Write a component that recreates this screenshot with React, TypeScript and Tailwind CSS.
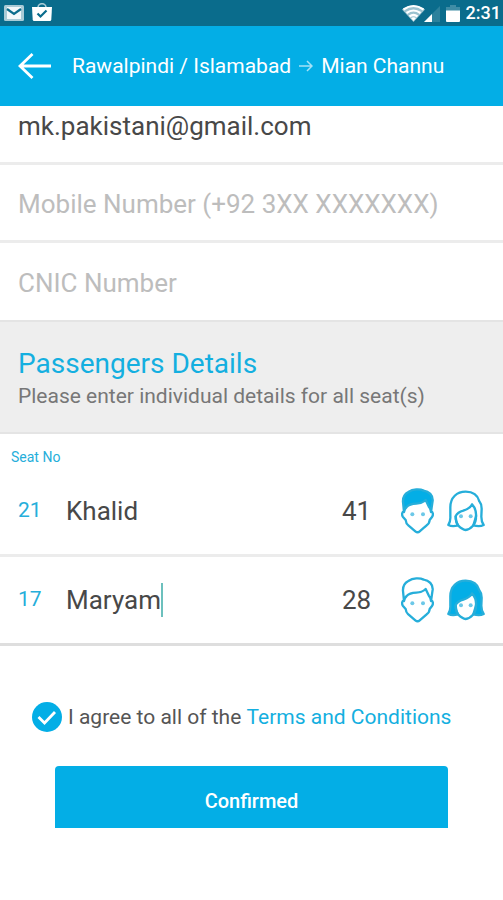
import { useState } from "react";

type Gender = "male" | "female";

type Passenger = {
  seat: number;
  name: string;
  age: string;
  gender: Gender;
};

const initialPassengers: Passenger[] = [
  { seat: 21, name: "Khalid", age: "41", gender: "male" },
  { seat: 17, name: "Maryam", age: "28", gender: "female" },
];

function StatusBar() {
  return (
    <div className="flex h-[26px] items-center justify-between bg-[#0a6c8c] pl-1 pr-[2px] text-white">
      <div className="flex items-center gap-2">
        <svg viewBox="0 0 20 16" className="h-4 w-5" aria-hidden="true">
          <rect width="20" height="16" rx="1.5" fill="#a9cbd6" />
          <path d="M3 2h14v12H3z" fill="#f2f8fa" />
          <path d="m3 4 7 5 7-5" fill="none" stroke="#0a6c8c" strokeWidth="2.2" />
        </svg>
        <svg viewBox="0 0 20 18" className="mb-[2px] h-[18px] w-5" aria-hidden="true">
          <path d="M6 4.5a4 3.8 0 0 1 8 0" fill="none" stroke="#a9cbd6" strokeWidth="1.6" />
          <path d="M0 4h20l-.7 12.5q-.1 1.5-1.5 1.5H2.2q-1.4 0-1.5-1.5z" fill="#fff" />
          <path d="m5.5 10.5 3 3 6-6" fill="none" stroke="#0a6c8c" strokeWidth="2.2" />
        </svg>
      </div>
      <div className="flex items-center">
        <svg viewBox="0 0 40 18" className="h-[18px] w-10" aria-hidden="true">
          <path d="M0 5.5Q11.5-3 23 5.5L11.5 18z" fill="#9cc3d0" />
          <path
            d="M1.5 5.5Q11.5-1.5 21.5 5.5M4.5 9q7-5 14 0M7.5 12.5q4-3 8 0"
            fill="none"
            stroke="#fff"
            strokeWidth="2.2"
          />
          <path d="m9 14 2.5 3 2.5-3q-2.5-1.5-5 0z" fill="#fff" />
          <path d="M22 18 38 2v16z" fill="#2c819c" />
          <path d="m22 18 8-8v8z" fill="#fff" />
        </svg>
        <svg viewBox="0 0 14 18" className="ml-1 h-[18px] w-[14px]" aria-hidden="true">
          <path d="M0 3h4V1h6v2h4v4H0z" fill="#3f8ca5" />
          <path d="M0 6.5h14V17q0 1-1 1H1q-1 0-1-1z" fill="#fff" />
        </svg>
        <span className="ml-[6px] text-lg leading-6 font-medium">2:31</span>
      </div>
    </div>
  );
}

function MaleIcon({ filled }: { filled: boolean }) {
  return (
    <svg
      viewBox="0 0 99 138"
      className="h-[46px] w-[33px]"
      fill="none"
      stroke="#26aeda"
      strokeWidth="7"
      strokeLinejoin="round"
      aria-hidden="true"
    >
      <path d="M9 70C2 71 2 82 6 87L14 96Q15 107 22 112L43 130Q50 136 56 130L77 112Q85 107 86 96L93 87C97 82 97 71 90 70" />
      <path
        d="M9 72L6 42C5 28 13 17 22 12C36 3 56 2 68 8C84 10 96 22 95 38L90 72Q89 62 84 57L74 36Q63 47 46 47Q25 48 17 57Q11 62 9 72Z"
        fill={filled ? "#03aee6" : "none"}
      />
      <g fill="#6cc8e8" stroke="none">
        <circle cx="34" cy="79" r="6" />
        <circle cx="66" cy="79" r="6" />
      </g>
    </svg>
  );
}

function FemaleIcon({ filled }: { filled: boolean }) {
  return (
    <svg
      viewBox="0 0 114 126"
      className="h-[42px] w-[38px]"
      fill="none"
      stroke="#26aeda"
      strokeWidth="7"
      strokeLinejoin="round"
      aria-hidden="true"
    >
      <path
        d="M33 106Q16 111 4 105Q11 94 10 80V52C10 22 30 5 56 5C78 5 92 15 97 34Q104 42 104 56L103 80Q103 95 110 105Q98 111 79 106L87 80Q89 58 75 43C71 53 60 58 49 62Q32 67 26 78Q26 96 33 106Z"
        fill={filled ? "#03aee6" : "none"}
      />
      <path d="M26 78Q26 97 34 107Q46 119 56 120Q67 119 78 107Q88 96 87 76" />
      <g fill="#6cc8e8" stroke="none">
        <circle cx="42" cy="79" r="6" />
        <circle cx="71" cy="79" r="6" />
      </g>
    </svg>
  );
}

type RowProps = {
  passenger: Passenger;
  editing: boolean;
  onChange: (passenger: Passenger) => void;
};

function PassengerRow({ passenger, editing, onChange }: RowProps) {
  const { seat, name, age, gender } = passenger;

  return (
    <li className="flex h-[89px] items-center border-b-[3px] border-[#ececec] px-[18px] last:border-[#dedede]">
      <span className="w-12 text-[21px] text-[#26aeda]">{seat}</span>
      <div className="flex min-w-0 flex-1 items-center">
        <input
          type="text"
          aria-label={`Name for seat ${seat}`}
          value={name}
          onChange={(e) => onChange({ ...passenger, name: e.target.value })}
          className="max-w-full text-[26px] leading-8 text-[#484848] outline-none [field-sizing:content]"
        />
        {editing && <span className="h-[34px] w-[2px] bg-[#6cc0bd]" />}
      </div>
      <input
        type="text"
        inputMode="numeric"
        aria-label={`Age for seat ${seat}`}
        value={age}
        onChange={(e) => onChange({ ...passenger, age: e.target.value })}
        className="w-[59px] text-[26px] leading-8 text-[#484848] outline-none"
      />
      <div className="flex items-center gap-[13px]">
        {(["male", "female"] as Gender[]).map((option) => (
          <label key={option} className="relative cursor-pointer">
            <input
              type="radio"
              name={`gender-${seat}`}
              aria-label={option}
              checked={gender === option}
              onChange={() => onChange({ ...passenger, gender: option })}
              className="sr-only"
            />
            {option === "male" ? (
              <MaleIcon filled={gender === "male"} />
            ) : (
              <FemaleIcon filled={gender === "female"} />
            )}
          </label>
        ))}
      </div>
    </li>
  );
}

export default function App() {
  const [passengers, setPassengers] = useState(initialPassengers);
  const [email, setEmail] = useState("mk.pakistani@gmail.com");
  const [agreed, setAgreed] = useState(true);

  const updatePassenger = (next: Passenger) =>
    setPassengers((list) => list.map((p) => (p.seat === next.seat ? next : p)));

  return (
    <div className="min-h-screen bg-white font-[Roboto,sans-serif]">
      <StatusBar />
      <header className="flex h-20 items-center bg-[#03aee6] px-[18px] text-white">
        <button type="button" aria-label="Back" className="mr-5 cursor-pointer">
          <svg
            viewBox="0 0 34 28"
            className="h-7 w-[34px]"
            fill="none"
            stroke="currentColor"
            strokeWidth="2.8"
            aria-hidden="true"
          >
            <path d="M33 14H2M14.5 2 2 14l12.5 12" />
          </svg>
        </button>
        <h1 className="flex items-center gap-2 text-[21px] leading-7 whitespace-nowrap">
          Rawalpindi / Islamabad
          <svg
            viewBox="0 0 14 12"
            className="h-3 w-[14px]"
            fill="none"
            stroke="#a5e2f7"
            strokeWidth="1.5"
            aria-hidden="true"
          >
            <path d="M0 6h13M8 1l5 5-5 5" />
          </svg>
          Mian Channu
        </h1>
      </header>

      <main>
        <form onSubmit={(e) => e.preventDefault()}>
          <input
            type="email"
            aria-label="Email"
            value={email}
            onChange={(e) => setEmail(e.target.value)}
            className="block h-[59px] w-full border-b-[3px] border-[#ececec] px-[18px] pb-4 text-[26px] text-[#484848] outline-none"
          />
          <input
            type="tel"
            aria-label="Mobile Number"
            placeholder="Mobile Number (+92 3XX XXXXXXX)"
            className="block h-[78px] w-full border-b-[3px] border-[#ececec] px-[18px] pt-[2px] text-[26px] outline-none placeholder:text-[#bdbdbd]"
          />
          <input
            type="text"
            aria-label="CNIC Number"
            placeholder="CNIC Number"
            className="block h-[77px] w-full px-[18px] pt-[2px] text-[26px] outline-none placeholder:text-[#bdbdbd]"
          />

          <section className="border-y-2 border-[#e4e4e4] bg-[#eeeeee] px-[18px] pt-6 pb-[22px]">
            <h2 className="text-[28px] leading-9 text-[#14afe0]">Passengers Details</h2>
            <p className="text-[21px] leading-7 text-[#777777]">
              Please enter individual details for all seat(s)
            </p>
          </section>

          <section>
            <p className="px-[11px] pt-[14px] pb-[2px] text-sm leading-[18px] text-[#26aeda]">
              Seat No
            </p>
            <ul>
              {passengers.map((passenger) => (
                <PassengerRow
                  key={passenger.seat}
                  passenger={passenger}
                  editing={passenger.seat === 17}
                  onChange={updatePassenger}
                />
              ))}
            </ul>
          </section>

          <div className="flex items-center px-8 pt-[55px]">
            <label className="relative flex cursor-pointer items-center gap-[6px] text-[21px] leading-8 whitespace-pre text-[#555555]">
              <input
                type="checkbox"
                checked={agreed}
                onChange={(e) => setAgreed(e.target.checked)}
                className="peer sr-only"
              />
              <svg
                viewBox="0 0 30 30"
                className="h-[30px] w-[30px] text-[#c4c4c4] peer-checked:text-[#03aee6]"
                aria-hidden="true"
              >
                <circle cx="15" cy="15" r="15" fill="currentColor" />
                <path d="m6.5 15 6 6L23 10" fill="none" stroke="#fff" strokeWidth="2.8" />
              </svg>
              I agree to all of the{" "}
            </label>
            <a href="#terms" className="text-[21px] leading-8 whitespace-nowrap text-[#14afe0]">
              Terms and Conditions
            </a>
          </div>

          <div className="px-[55px] pt-[33px]">
            <button
              type="submit"
              className="h-[62px] w-full cursor-pointer rounded-t-[4px] bg-[#03aee6] pt-2 text-xl font-medium text-white"
            >
              Confirmed
            </button>
          </div>
        </form>
      </main>
    </div>
  );
}
